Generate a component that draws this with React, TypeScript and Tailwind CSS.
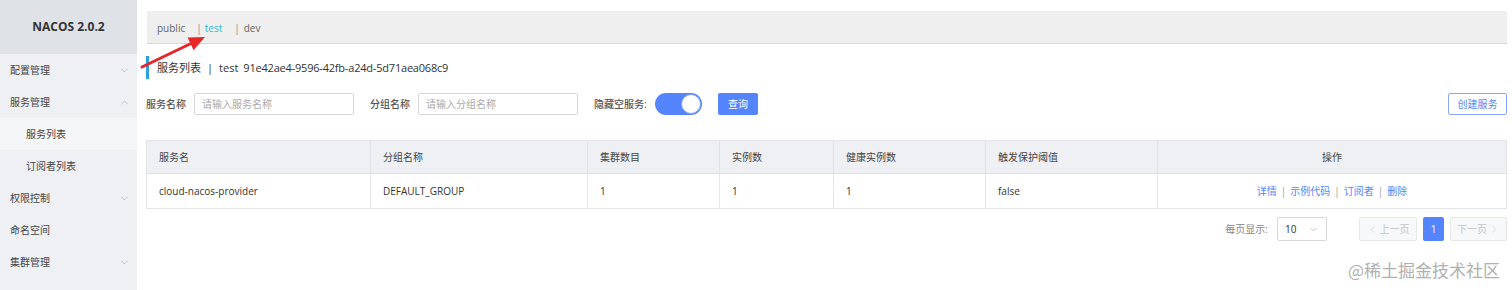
import { ChevronDown, ChevronUp, ChevronLeft, ChevronRight } from 'lucide-react';

const menu = [
  { label: '配置管理', icon: 'down' },
  { label: '服务管理', icon: 'up' },
  { label: '服务列表', sub: true, active: true },
  { label: '订阅者列表', sub: true },
  { label: '权限控制', icon: 'down' },
  { label: '命名空间' },
  { label: '集群管理', icon: 'down' },
];

const columns = ['服务名', '分组名称', '集群数目', '实例数', '健康实例数', '触发保护阈值'];
const row = ['cloud-nacos-provider', 'DEFAULT_GROUP', '1', '1', '1', 'false'];
const actions = ['详情', '示例代码', '订阅者', '删除'];

function Sidebar() {
  return (
    <div className="w-[137px] shrink-0 bg-[#eef0f3] h-full">
      <div className="h-[54px] bg-[#dfe2e6] flex items-center justify-center text-[12px] font-bold text-[#333]">
        NACOS 2.0.2
      </div>
      {menu.map(item => (
        <div
          key={item.label}
          className={`h-[32px] flex items-center justify-between pr-[7px] pt-px text-[10px] text-[#444] ${item.sub ? 'pl-[26px]' : 'pl-[10px]'} ${item.active ? 'bg-[#f5f6f8]' : ''}`}
        >
          <span>{item.label}</span>
          {item.icon === 'down' && <ChevronDown size={11} strokeWidth={1.2} className="text-[#999]" />}
          {item.icon === 'up' && <ChevronUp size={11} strokeWidth={1.2} className="text-[#999]" />}
        </div>
      ))}
    </div>
  );
}

function Arrow() {
  return (
    <svg className="absolute left-[136px] top-[28px]" width="80" height="44" viewBox="0 0 80 44">
      <line x1="6" y1="39" x2="56" y2="15" stroke="#e8262a" strokeWidth="3" strokeLinecap="round" />
      <polygon points="69,9 57.6,22.2 51.6,9.6" fill="#e8262a" />
    </svg>
  );
}

export default function App() {
  return (
    <div className="relative flex h-[290px] overflow-hidden bg-white font-['Open_Sans','Noto_Sans_CJK_SC',sans-serif] text-[#333]">
      <Sidebar />

      <div className="flex-1 pl-[9px] pr-[5px]">
        {/* namespace bar */}
        <div className="mt-[11px] ml-px h-[33px] bg-[#efefef] border-b border-[#d9d9d9] flex items-center pt-[3px] pl-[10px] text-[10px] text-[#666]">
          <span>public</span>
          <span className="ml-[11px] text-[#888]">|</span>
          <span className="ml-[3px] text-[#33b8d9]">test</span>
          <span className="ml-[12px] text-[#888]">|</span>
          <span className="ml-[4px]">dev</span>
        </div>

        {/* title */}
        <div className="mt-[12px] flex items-center h-[23px] border-l-[3px] border-[#2ca2dc] pl-[8px] pt-[2px] text-[11px] text-[#333]">
          <span>服务列表</span>
          <span className="mx-[6px]">|</span>
          <span>test</span>
          <span className="ml-[5px] tracking-[-0.2px]">91e42ae4-9596-42fb-a24d-5d71aea068c9</span>
        </div>

        {/* filters */}
        <div className="mt-[14px] flex items-center h-[22px] text-[10px]">
          <span className="w-[48px] font-medium text-[#555]">服务名称</span>
          <div className="w-[160px] h-[22px] border border-[#d6d8dc] rounded-[2px] flex items-center pl-[7px] text-[#aaa]">
            请输入服务名称
          </div>
          <span className="ml-[16px] w-[48px] font-medium text-[#555]">分组名称</span>
          <div className="w-[160px] h-[22px] border border-[#d6d8dc] rounded-[2px] flex items-center pl-[7px] text-[#aaa]">
            请输入分组名称
          </div>
          <span className="ml-[16px] w-[61px] font-medium text-[#555]">隐藏空服务:</span>
          <div className="w-[47px] h-[22px] rounded-full bg-[#5584ff] flex items-center justify-end pr-px">
            <div className="w-[20px] h-[20px] rounded-full bg-white border border-[#7fa0f5]" />
          </div>
          <button className="ml-[16px] w-[40px] h-[22px] rounded-[2px] bg-[#5584ff] text-white text-[10px]">
            查询
          </button>
          <button className="ml-auto w-[59px] h-[22px] rounded-[2px] border border-[#8aa8f7] text-[#5584ff] text-[10px]">
            创建服务
          </button>
        </div>

        {/* table */}
        <div className="mt-[25px] border border-[#e3e4e8] text-[10px]">
          <div className="grid grid-cols-[224px_217px_132px_114px_152px_172px_1fr] h-[33px] bg-[#eff0f3] border-b border-[#e0e1e5]">
            {columns.map(c => (
              <div key={c} className="flex items-center pl-[12px] border-r border-[#e0e1e5] text-[#444]">
                {c}
              </div>
            ))}
            <div className="flex items-center justify-center text-[#444]">操作</div>
          </div>
          <div className="grid grid-cols-[224px_217px_132px_114px_152px_172px_1fr] h-[34px]">
            {row.map((v, i) => (
              <div key={i} className="flex items-center pl-[12px] border-r border-[#e6e7ea] text-[#333]">
                {v}
              </div>
            ))}
            <div className="flex items-center justify-center text-[#5584ff]">
              {actions.map((a, i) => (
                <span key={a} className="flex items-center">
                  {i > 0 && <span className="mx-[4px] text-[#999]">|</span>}
                  {a}
                </span>
              ))}
            </div>
          </div>
        </div>

        {/* pagination */}
        <div className="mt-[8px] flex items-center justify-end h-[24px] text-[10px]">
          <span className="text-[#888]">每页显示:</span>
          <div className="ml-[9px] w-[50px] h-[24px] border border-[#d6d8dc] rounded-[2px] flex items-center justify-between px-[7px] text-[#333]">
            <span>10</span>
            <ChevronDown size={11} strokeWidth={1.2} className="text-[#999]" />
          </div>
          <div className="ml-[32px] w-[58px] h-[24px] bg-[#f7f8fa] border border-[#e6e7eb] rounded-[2px] flex items-center justify-center text-[#c4c6cf]">
            <ChevronLeft size={11} strokeWidth={1.2} />
            <span className="ml-[2px]">上一页</span>
          </div>
          <div className="ml-[6px] w-[21px] h-[24px] bg-[#5584ff] rounded-[2px] flex items-center justify-center text-white">
            1
          </div>
          <div className="ml-[6px] w-[57px] h-[24px] bg-[#f7f8fa] border border-[#e6e7eb] rounded-[2px] flex items-center justify-center text-[#c4c6cf]">
            <span className="mr-[2px]">下一页</span>
            <ChevronRight size={11} strokeWidth={1.2} />
          </div>
        </div>
      </div>

      <Arrow />

      <div className="absolute right-[12px] bottom-[8px] text-[17px] text-[#b0b0b0] font-['Noto_Sans_CJK_SC',sans-serif]">
        @稀土掘金技术社区
      </div>
    </div>
  );
}
